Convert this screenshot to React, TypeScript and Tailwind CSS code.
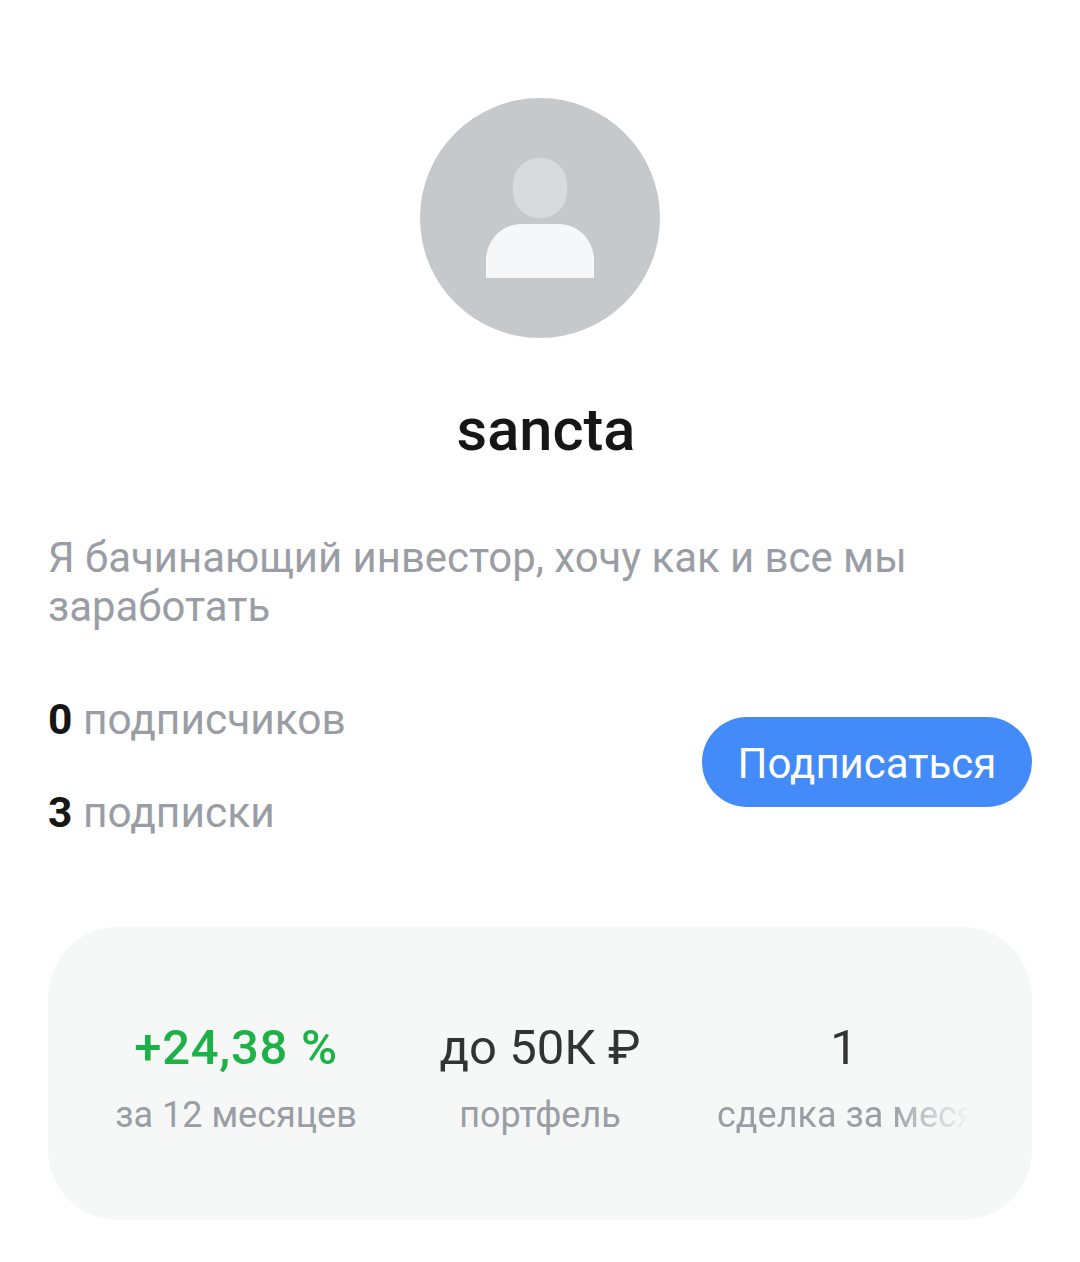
function Avatar() {
  return (
    <svg width="240" height="240" viewBox="0 0 240 240" className="block">
      <circle cx="120" cy="120" r="120" fill="#c5c9cc" />
      <rect x="93" y="60" width="54" height="60" rx="26" fill="#d8dbdd" />
      <path d="M66 180V162C66 144 80 126 102 126H138C160 126 174 144 174 162V180Z" fill="#f5f7f8" />
    </svg>
  );
}

function App() {
  return (
    <div className="w-[1080px] h-[1262px] bg-white px-12 pt-[98px] overflow-hidden font-['Roboto',sans-serif]">
      <div className="flex justify-center">
        <Avatar />
      </div>
      <h1 className="mt-[60px] pl-3 text-center text-[59.5px] leading-[64px] font-medium text-[#161616]">sancta</h1>
      <p className="mt-[71px] text-[41.9px] leading-[49px] text-[#9a9ea4]">
        Я бачинающий инвестор, хочу как и все мы заработать
      </p>
      <div className="mt-[65px] flex items-center justify-between">
        <div className="flex flex-col gap-[45px] text-[42.5px] leading-[48px] text-[#9a9ea4]">
          <div>
            <span className="font-bold text-[#161616]">0</span> подписчиков
          </div>
          <div>
            <span className="font-bold text-[#161616]">3</span> подписки
          </div>
        </div>
        <button className="w-[330px] h-[90px] mb-[10px] pt-[3px] rounded-full bg-[#428bf9] text-white text-[42px]">Подписаться</button>
      </div>
      <div className="mt-[90px] h-[293px] rounded-[70px] bg-[#f6f8f8] flex items-center pl-[36px]">
        <div className="w-[304px] shrink-0 text-center whitespace-nowrap pt-[9px]">
          <div className="text-[49px] leading-[54px] font-medium tracking-[0.7px] text-[#1db148]">+24,38 %</div>
          <div className="mt-[20px] text-[36px] leading-[40px] text-[#9a9ea4]">за 12 месяцев</div>
        </div>
        <div className="w-[304px] shrink-0 text-center whitespace-nowrap pt-[9px]">
          <div className="text-[49px] leading-[54px] text-[#333333]">до 50К ₽</div>
          <div className="mt-[20px] text-[36px] leading-[40px] text-[#9a9ea4]">портфель</div>
        </div>
        <div className="w-[304px] shrink-0 text-center whitespace-nowrap pt-[9px]">
          <div className="text-[49px] leading-[54px] text-[#333333]">1</div>
          {/* long caption is cut off and fades at the end of its box */}
          <div className="mt-[20px] mx-auto w-[254px] overflow-hidden text-left text-[36px] leading-[40px] text-[#9a9ea4] [mask-image:linear-gradient(to_right,black_68%,transparent_100%)]">
            сделка за месяц
          </div>
        </div>
      </div>
    </div>
  );
}

export default App;
